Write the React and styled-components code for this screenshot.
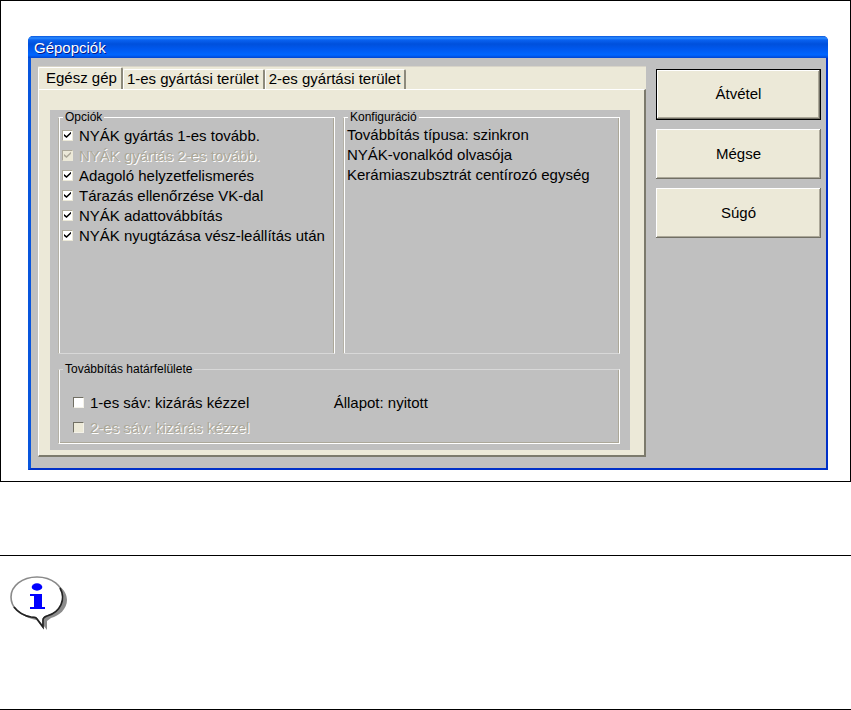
import styled, { createGlobalStyle } from "styled-components";

const options = [
  { label: "NYÁK gyártás 1-es tovább.", checked: true },
  { label: "NYÁK gyártás 2-es tovább.", checked: true, disabled: true },
  { label: "Adagoló helyzetfelismerés", checked: true },
  { label: "Tárazás ellenőrzése VK-dal", checked: true },
  { label: "NYÁK adattovábbítás", checked: true },
  { label: "NYÁK nyugtázása vész-leállítás után", checked: true },
];

const configuration = [
  "Továbbítás típusa: szinkron",
  "NYÁK-vonalkód olvasója",
  "Kerámiaszubsztrát centírozó egység",
];

const tabs = ["Egész gép", "1-es gyártási terület", "2-es gyártási terület"];

const Option = ({ label, checked, disabled, sunken }) => (
  <OptionLabel $disabled={disabled} $sunken={sunken}>
    <CheckBox
      type="checkbox"
      defaultChecked={checked}
      disabled={disabled}
      $sunken={sunken}
    />
    {label}
  </OptionLabel>
);

const InfoIcon = () => (
  <svg width="60" height="58" viewBox="0 0 60 58" aria-hidden="true">
    <path
      d="M31 6C46 6 57 14 57 25C57 34 49 41 41 43L37 46V55L30 46L22 44C12 41 5 34 5 25Z"
      fill="#8c8c8c"
    />
    <path
      d="M27 2C42 2 53 11 53 22C53 32 46 39 37 41C34 42 33 43 33 45V52L27 44C26 42 24 42 21 42C9 40 1 32 1 22C1 11 12 2 27 2Z"
      fill="#fff"
      stroke="#8a8a8a"
      strokeWidth="1.6"
    />
    <path
      d="M50 13C56 24 51 37 37 41C34 42 33 43 33 45V52L27 44C26 42 24 42 21 42C14 41 8 37 4 32"
      fill="none"
      stroke="#222"
      strokeWidth="1.6"
    />
    <ellipse cx="27" cy="12" rx="5.3" ry="3.7" fill="#00f" />
    <path d="M20 19H32V32H35V34H20V32H24V21H20Z" fill="#00f" />
  </svg>
);

const App = () => {
  return (
    <>
      <GlobalStyle />
      <Figure>
        <Dialog>
          <TitleBar>Gépopciók</TitleBar>
          <DialogBody>
            <TabControl>
              <TabList role="tablist">
                {tabs.map((tab, index) => (
                  <Tab
                    key={tab}
                    type="button"
                    role="tab"
                    aria-selected={index === 0}
                    $active={index === 0}
                  >
                    {tab}
                  </Tab>
                ))}
              </TabList>
              <TabPage role="tabpanel">
                <Panel>
                  <Columns>
                    <Group>
                      <Legend>Opciók</Legend>
                      <OptionList>
                        {options.map((option) => (
                          <Option key={option.label} {...option} />
                        ))}
                      </OptionList>
                    </Group>
                    <Group>
                      <Legend>Konfiguráció</Legend>
                      <ConfigList>
                        {configuration.map((item) => (
                          <li key={item}>{item}</li>
                        ))}
                      </ConfigList>
                    </Group>
                  </Columns>
                  <Group $sunken>
                    <Legend>Továbbítás határfelülete</Legend>
                    <TransferGrid>
                      <Option label="1-es sáv: kizárás kézzel" sunken />
                      <Status>Állapot: nyitott</Status>
                      <Option label="2-es sáv: kizárás kézzel" disabled sunken />
                    </TransferGrid>
                  </Group>
                </Panel>
              </TabPage>
            </TabControl>
            <Actions>
              <ActionButton type="button" $primary>
                Átvétel
              </ActionButton>
              <ActionButton type="button">Mégse</ActionButton>
              <ActionButton type="button">Súgó</ActionButton>
            </Actions>
          </DialogBody>
        </Dialog>
      </Figure>
      <Note>
        <InfoIcon />
      </Note>
    </>
  );
};

const GlobalStyle = createGlobalStyle`
  * {
    box-sizing: border-box;
  }
  body {
    margin: 0;
    background-color: #fff;
    color: #000;
    font-family: "Liberation Sans", Arial, sans-serif;
    font-size: 15px;
  }
`;

const Figure = styled.section`
  border: 1px solid #000;
  padding: 35px 22px 11px 27px;
`;

const Dialog = styled.div`
  background-color: #c0c0c0;
  border: solid;
  border-width: 0 2px 2px 3px;
  border-color: #0046e8 #0030c8 #0030c8 #0855dd;
  border-radius: 5px 5px 0 0;
`;

const TitleBar = styled.header`
  height: 22px;
  margin: 0 -2px 0 -3px;
  padding-left: 6px;
  border-radius: 5px 5px 0 0;
  background: linear-gradient(
    #0855dd 0,
    #2c8cff 2px,
    #0a62f0 4px,
    #0050dc 8px,
    #0058ee 13px,
    #0066ff 19px,
    #0044d0 22px
  );
  color: #fff;
  line-height: 24px;
  text-shadow: 1px 1px #0a1883;
`;

const DialogBody = styled.div`
  display: flex;
  gap: 10px;
  padding: 8px 5px 11px 7px;
`;

const TabControl = styled.div`
  flex: 1;
  min-width: 0;
  background-color: #ece9d8;
`;

const TabList = styled.div`
  display: flex;
  align-items: flex-end;
  height: 23px;
  border-top: 1px solid #d8d4c8;
`;

const Tab = styled.button`
  height: ${(props) => (props.$active ? "22px" : "20px")};
  padding: ${(props) => (props.$active ? "0 4px 2px 7px" : "0 4px 1px 3px")};
  border: solid;
  border-width: 1px 2px 0 1px;
  border-color: #fff #8d8a7c #fff #fff;
  border-radius: 2px 2px 0 0;
  background-color: #ece9d8;
  color: #000;
  font-family: inherit;
  font-size: 15px;
  line-height: 18px;
  white-space: nowrap;
`;

const TabPage = styled.div`
  padding: 20px 14px 5px 11px;
  border: solid;
  border-width: 1px 2px 2px 1px;
  border-color: #fff #7c7a6c #7c7a6c #fff;
`;

const Panel = styled.div`
  display: flex;
  flex-direction: column;
  gap: 8px;
  padding: 0 10px 6px 8px;
  background-color: #c0c0c0;
`;

const Columns = styled.div`
  display: grid;
  grid-template-columns: 1fr 1fr;
  gap: 8px;
  min-height: 244px;
`;

const Group = styled.fieldset`
  min-width: 0;
  margin: 0;
  padding: 1px 3px 3px;
  border: 1px solid #fff;
  border-left-color: #b4b1a6;
  border-top-color: ${(props) => (props.$sunken ? "#d8d8d8" : "#fff")};
  border-bottom-color: ${(props) => (props.$sunken ? "#fff" : "#d8d8d8")};
  box-shadow: inset 1px 0 #fff,
    ${(props) => (props.$sunken ? "inset -1px -1px" : "inset -1px 0")} #aca899;
`;

const Legend = styled.legend`
  margin-left: 1px;
  padding: 0 2px;
  font-size: 12px;
  line-height: 14px;
`;

const OptionList = styled.div`
  display: flex;
  flex-direction: column;
`;

const OptionLabel = styled.label`
  display: flex;
  align-items: center;
  gap: 6px;
  height: ${(props) => (props.$sunken ? "25px" : "20px")};
  color: ${(props) => (props.$disabled ? "#aca899" : "#000")};
  text-shadow: ${(props) => (props.$disabled ? "1px 1px #fff" : "none")};
  white-space: nowrap;
`;

const CheckBox = styled.input`
  appearance: none;
  flex: none;
  width: 11px;
  height: 11px;
  margin: 0;
  border: 1px solid;
  border-color: ${(props) =>
    props.$sunken ? "#716f64 #f4f2e8 #f4f2e8 #716f64" : "#aca899 #ece9d8 #ece9d8 #aca899"};
  background-color: #fff;

  &:disabled {
    background-color: #ece9d8;
  }
  &:checked::before {
    content: "";
    display: block;
    width: 7px;
    height: 7px;
    margin: 1px;
    background-color: #000;
    clip-path: polygon(0 36%, 36% 66%, 100% 4%, 100% 32%, 36% 94%, 0 64%);
  }
  &:checked:disabled::before {
    background-color: #aca899;
  }
`;

const ConfigList = styled.ul`
  margin: 0;
  padding: 0;
  list-style: none;
  line-height: 20px;
`;

const TransferGrid = styled.div`
  display: grid;
  grid-template-columns: 12fr 13fr;
  align-items: center;
  padding: 13px 0 0 11px;
`;

const Status = styled.span`
  white-space: nowrap;
`;

const Actions = styled.div`
  display: flex;
  flex-direction: column;
  gap: 9px;
  width: 165px;
  padding-top: 3px;
`;

const ActionButton = styled.button`
  height: ${(props) => (props.$primary ? "51px" : "50px")};
  padding: 0 0 2px;
  border: ${(props) => (props.$primary ? "1px solid #000" : "none")};
  background-color: #ece9d8;
  box-shadow: inset -1px -1px #716f64, inset 1px 1px #fff,
    inset -2px -2px #aca899;
  color: #000;
  font-family: inherit;
  font-size: 15px;
`;

const Note = styled.aside`
  min-height: 155px;
  margin-top: 73px;
  padding: 19px 10px;
  border-top: 1px solid #000;
  border-bottom: 1px solid #000;
`;

export default App;
